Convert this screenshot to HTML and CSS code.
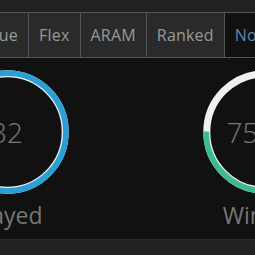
FILE: index.html
```html
<!DOCTYPE html>
<html>
<head>
<meta charset="utf-8">
<link rel="stylesheet" href="styles.css">
</head>
<body>
<div class="topbar"></div>
<nav class="tabs">
  <a class="tab">Queue</a>
  <a class="tab">Flex</a>
  <a class="tab">ARAM</a>
  <a class="tab">Ranked</a>
  <a class="tab active">Normal</a>
</nav>
<main class="stats">
  <div class="stat">
    <div class="ring">
      <svg width="124" height="124" viewBox="0 0 124 124">
        <circle cx="62" cy="62" r="58.2" fill="none" stroke="#f0f0f0" stroke-width="7"/>
        <circle cx="62" cy="62" r="58.85" fill="none" stroke="#2a9fd6" stroke-width="5.7"/>
      </svg>
      <span class="num">32</span>
    </div>
    <div class="label">Played</div>
  </div>
  <div class="stat">
    <div class="ring">
      <svg width="124" height="124" viewBox="0 0 124 124">
        <circle cx="62" cy="62" r="58.2" fill="none" stroke="#f0f0f0" stroke-width="7"/>
        <circle cx="62" cy="62" r="58.85" fill="none" stroke="#3dbb8c" stroke-width="5.7" stroke-dasharray="277.4 400" transform="rotate(-90 62 62)"/>
      </svg>
      <span class="num">75.0%</span>
    </div>
    <div class="label">Winrate</div>
  </div>
</main>
<footer class="foot"></footer>
</body>
</html>
```
FILE: styles.css
```css
html, body {
  margin: 0;
  padding: 0;
  background: #222;
  overflow: hidden;
  font-family: "Open Sans", "DejaVu Sans", sans-serif;
}
.topbar {
  height: 12px;
  background: #222;
}
.tabs {
  display: flex;
  margin-left: -43px;
  width: 400px;
  border-top: 1px solid #555;
  border-bottom: 1px solid #555;
  background: #2a2a2a;
}
.tab {
  display: block;
  padding: 0 10px;
  height: 44px;
  line-height: 44px;
  font-size: 16px;
  letter-spacing: 0.2px;
  color: #999;
  border-right: 1px solid #555;
  white-space: nowrap;
}
.tab.active {
  background: #111;
  color: #5a87ab;
}
.stats {
  display: flex;
  gap: 134px;
  margin-left: -55px;
  width: 500px;
  padding: 12px 0 8px;
  background: #111;
  box-shadow: 55px 0 0 #111;
}
.stat {
  width: 124px;
  display: flex;
  flex-direction: column;
  align-items: center;
}
.ring {
  display: grid;
  width: 124px;
  height: 124px;
}
.ring svg, .ring .num {
  grid-area: 1 / 1;
}
.ring svg { display: block; }
.num {
  align-self: center;
  justify-self: center;
  font-size: 28px;
  font-weight: 300;
  color: #7a7a7a;
  white-space: nowrap;
}
.label {
  margin-top: 5px;
  font-size: 23px;
  color: #777;
  white-space: nowrap;
}
.foot {
  height: 30px;
  border-top: 1px solid #2e2e2e;
  background: #222;
}
```
